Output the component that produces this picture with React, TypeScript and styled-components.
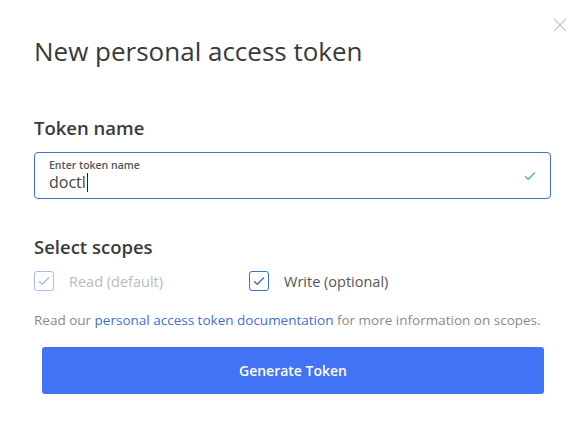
import styled, { createGlobalStyle } from 'styled-components'

const GlobalStyle = createGlobalStyle`
  html, body {
    margin: 0;
    padding: 0;
    background: #fff;
  }
  body {
    font-family: 'Open Sans', Lato, 'Liberation Sans', sans-serif;
    color: #333;
  }
`

const Modal = styled.div`
  position: relative;
  width: 583px;
  height: 429px;
  box-sizing: border-box;
  padding: 32px 32px 0 34px;
`

const Close = styled.button`
  position: absolute;
  top: 17px;
  right: 15px;
  width: 16px;
  height: 16px;
  padding: 0;
  border: 0;
  background: none;
  cursor: pointer;
  svg {
    display: block;
  }
`

const Title = styled.h1`
  margin: 0;
  font-size: 26px;
  font-weight: 400;
  line-height: 38px;
  color: #3a3a3a;
`

const SectionTitle = styled.h2`
  margin: 0;
  font-size: 18.5px;
  font-weight: 600;
  line-height: 24px;
  color: #3b3b3b;
`

const TokenSection = styled.section`
  margin-top: 46px;
  display: flex;
  flex-direction: column;
  gap: 12px;
`

const Field = styled.label`
  display: flex;
  align-items: center;
  width: 517px;
  height: 47px;
  box-sizing: border-box;
  border: 1px solid #3f6fd0;
  border-radius: 4px;
  padding: 0 14px 0 14px;
`

const FieldBody = styled.div`
  flex: 1;
  display: flex;
  flex-direction: column;
`

const FieldLabel = styled.span`
  font-size: 10.5px;
  font-weight: 600;
  color: #555;
  line-height: 13px;
`

const FieldValue = styled.span`
  font-size: 16px;
  color: #444;
  line-height: 20px;
  display: flex;
  align-items: center;
`

const Caret = styled.span`
  display: inline-block;
  width: 1px;
  height: 19px;
  background: #222;
  margin-left: 1px;
`

const ScopeSection = styled.section`
  margin-top: 36px;
  display: flex;
  flex-direction: column;
`

const ScopeRow = styled.div`
  display: grid;
  grid-template-columns: 215px auto;
  margin-top: 12px;
`

const Scope = styled.div<{ $disabled?: boolean }>`
  display: flex;
  align-items: center;
  gap: 15px;
  font-size: 14.5px;
  color: ${(p) => (p.$disabled ? '#bbbbbb' : '#555')};
`

const Box = styled.span<{ $disabled?: boolean }>`
  width: 20px;
  height: 20px;
  box-sizing: border-box;
  border-radius: 3px;
  border: 1px solid ${(p) => (p.$disabled ? '#a9bdf0' : '#3f6fd0')};
  display: flex;
  align-items: center;
  justify-content: center;
  svg {
    display: block;
  }
`

const Note = styled.p`
  margin: 20px 0 0;
  font-size: 13.5px;
  color: #8a8a8a;
  a {
    color: #3f6fd0;
    text-decoration: none;
  }
`

const Generate = styled.button`
  display: block;
  margin: 18px 0 0 8px;
  width: 502px;
  height: 47px;
  border: 0;
  border-radius: 3px;
  background: #4273f5;
  color: #fff;
  font-family: inherit;
  font-size: 14px;
  font-weight: 600;
  cursor: pointer;
`

const Tick = ({ color }: { color: string }) => (
  <svg width="12" height="10" viewBox="0 0 12 10" fill="none">
    <path d="M1 5.2 L4.3 8.2 L11 1.5" stroke={color} strokeWidth="1.4" />
  </svg>
)

const App = () => {
  return (
    <>
      <GlobalStyle />
      <Modal>
        <Close aria-label="Close">
          <svg width="16" height="16" viewBox="0 0 16 16">
            <path d="M2 2 L14 14 M14 2 L2 14" stroke="#c8c8c8" strokeWidth="1.3" />
          </svg>
        </Close>
        <Title>New personal access token</Title>
        <TokenSection>
          <SectionTitle>Token name</SectionTitle>
          <Field>
            <FieldBody>
              <FieldLabel>Enter token name</FieldLabel>
              <FieldValue>
                doctl
                <Caret />
              </FieldValue>
            </FieldBody>
            <Tick color="#5bbf6a" />
          </Field>
        </TokenSection>
        <ScopeSection>
          <SectionTitle>Select scopes</SectionTitle>
          <ScopeRow>
            <Scope $disabled>
              <Box $disabled>
                <Tick color="#a9bdf0" />
              </Box>
              Read (default)
            </Scope>
            <Scope>
              <Box>
                <Tick color="#3f6fd0" />
              </Box>
              Write (optional)
            </Scope>
          </ScopeRow>
          <Note>
            Read our <a href="#">personal access token documentation</a> for more
            information on scopes.
          </Note>
        </ScopeSection>
        <Generate>Generate Token</Generate>
      </Modal>
    </>
  )
}

export default App
